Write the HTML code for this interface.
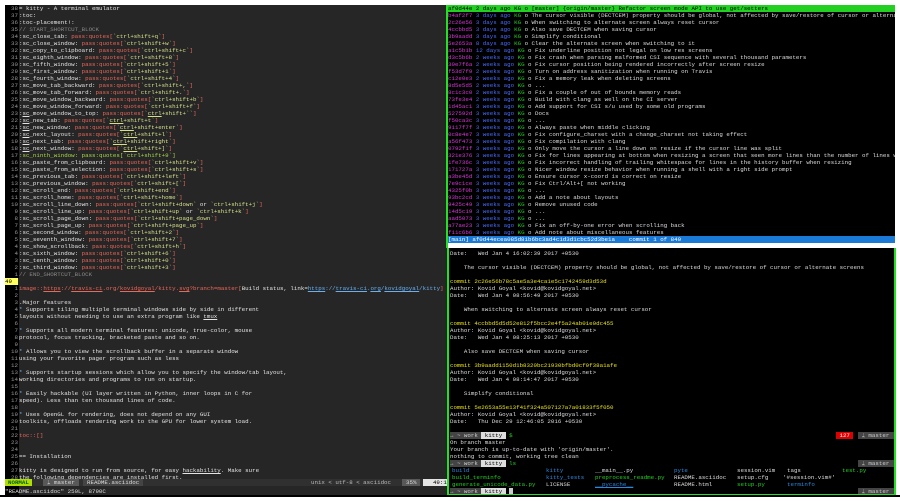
<!DOCTYPE html>
<html><head><meta charset="utf-8"><style>
*{margin:0;padding:0;box-sizing:border-box}
body{width:900px;height:503px;background:#fff;position:relative;overflow:hidden;font-family:"Liberation Mono",monospace;font-size:5.8px;line-height:7px;white-space:normal;color:#ddd}
.p{position:absolute;overflow:hidden}
.row{height:7px;display:block;overflow:hidden;white-space:pre}
#L{left:5px;top:5px;width:442px;height:490px;background:#262626}
#G{position:absolute;left:0;top:0;width:14px;height:100%;background:#000}
.ln{display:inline-block;width:13px;text-align:right;color:#999;margin-right:1px}
.w{color:#e4e4e4}.r{color:#e8685a}.y{color:#d7e08a}.g{color:#a8d84a}.c{color:#888}.b{color:#6ab0f0}
.u{text-decoration:underline}
#RT{left:448px;top:5px;width:447px;height:238px;background:#000}
#RB{left:447px;top:248px;width:449px;height:248px;background:#000;border-left:2px solid #22e022;border-right:2px solid #22e022;border-bottom:2px solid #22e022}
.m{color:#d838d8}.d{color:#4a6cff}.k{color:#22d022}.yl{color:#e8e020}.bl{color:#2a8ae0}
.s{white-space:pre}
</style></head><body>
<div class="p" id="L"><div id="G"></div>
<div style="position:absolute;left:0;top:0;width:442px">
<span class="row"><span class="ln">38</span><span class="w">= kitty - A terminal emulator</span></span>
<span class="row"><span class="ln">37</span><span class="w">:toc:</span></span>
<span class="row"><span class="ln">36</span><span class="w">:toc-placement!:</span></span>
<span class="row"><span class="ln">35</span><span class="c">// START_SHORTCUT_BLOCK</span></span>
<span class="row"><span class="ln">34</span><span class="w">:sc_close_tab: </span><span class="r">pass:quotes[</span><span class="y">`ctrl+shift+q`</span><span class="r">]</span></span>
<span class="row"><span class="ln">33</span><span class="w">:sc_close_window: </span><span class="r">pass:quotes[</span><span class="y">`ctrl+shift+w`</span><span class="r">]</span></span>
<span class="row"><span class="ln">32</span><span class="w">:sc_copy_to_clipboard: </span><span class="r">pass:quotes[</span><span class="y">`ctrl+shift+c`</span><span class="r">]</span></span>
<span class="row"><span class="ln">31</span><span class="w">:sc_eighth_window: </span><span class="r">pass:quotes[</span><span class="y">`ctrl+shift+8`</span><span class="r">]</span></span>
<span class="row"><span class="ln">30</span><span class="w">:sc_fifth_window: </span><span class="r">pass:quotes[</span><span class="y">`ctrl+shift+5`</span><span class="r">]</span></span>
<span class="row"><span class="ln">29</span><span class="w">:sc_first_window: </span><span class="r">pass:quotes[</span><span class="y">`ctrl+shift+1`</span><span class="r">]</span></span>
<span class="row"><span class="ln">28</span><span class="w">:sc_fourth_window: </span><span class="r">pass:quotes[</span><span class="y">`ctrl+shift+4`</span><span class="r">]</span></span>
<span class="row"><span class="ln">27</span><span class="w">:sc_move_tab_backward: </span><span class="r">pass:quotes[</span><span class="y">`ctrl+shift+,`</span><span class="r">]</span></span>
<span class="row"><span class="ln">26</span><span class="w">:sc_move_tab_forward: </span><span class="r">pass:quotes[</span><span class="y">`ctrl+shift+.`</span><span class="r">]</span></span>
<span class="row"><span class="ln">25</span><span class="w">:sc_move_window_backward: </span><span class="r">pass:quotes[</span><span class="y">`ctrl+shift+b`</span><span class="r">]</span></span>
<span class="row"><span class="ln">24</span><span class="w">:sc_move_window_forward: </span><span class="r">pass:quotes[</span><span class="y">`ctrl+shift+f`</span><span class="r">]</span></span>
<span class="row"><span class="ln">23</span><span class="w">:<span class="u">sc</span>_move_window_to_top: </span><span class="r">pass:quotes[</span><span class="y">`<span class="u">ctrl</span>+shift+``</span><span class="r">]</span></span>
<span class="row"><span class="ln">22</span><span class="w">:<span class="u">sc</span>_new_tab: </span><span class="r">pass:quotes[</span><span class="y">`<span class="u">ctrl</span>+shift+t`</span><span class="r">]</span></span>
<span class="row"><span class="ln">21</span><span class="w">:<span class="u">sc</span>_new_window: </span><span class="r">pass:quotes[</span><span class="y">`<span class="u">ctrl</span>+shift+enter`</span><span class="r">]</span></span>
<span class="row"><span class="ln">20</span><span class="w">:<span class="u">sc</span>_next_layout: </span><span class="r">pass:quotes[</span><span class="y">`<span class="u">ctrl</span>+shift+l`</span><span class="r">]</span></span>
<span class="row"><span class="ln">19</span><span class="w">:<span class="u">sc</span>_next_tab: </span><span class="r">pass:quotes[</span><span class="y">`<span class="u">ctrl</span>+shift+right`</span><span class="r">]</span></span>
<span class="row"><span class="ln">18</span><span class="w">:<span class="u">sc</span>_next_window: </span><span class="r">pass:quotes[</span><span class="y">`<span class="u">ctrl</span>+shift+]`</span><span class="r">]</span></span>
<span class="row"><span class="ln">17</span><span class="g">:sc_ninth_window: pass:quotes[`ctrl+shift+9`]</span></span>
<span class="row"><span class="ln">16</span><span class="w">:sc_paste_from_clipboard: </span><span class="r">pass:quotes[</span><span class="y">`ctrl+shift+v`</span><span class="r">]</span></span>
<span class="row"><span class="ln">15</span><span class="w">:sc_paste_from_selection: </span><span class="r">pass:quotes[</span><span class="y">`ctrl+shift+s`</span><span class="r">]</span></span>
<span class="row"><span class="ln">14</span><span class="w">:sc_previous_tab: </span><span class="r">pass:quotes[</span><span class="y">`ctrl+shift+left`</span><span class="r">]</span></span>
<span class="row"><span class="ln">13</span><span class="w">:sc_previous_window: </span><span class="r">pass:quotes[</span><span class="y">`ctrl+shift+[`</span><span class="r">]</span></span>
<span class="row"><span class="ln">12</span><span class="w">:sc_scroll_end: </span><span class="r">pass:quotes[</span><span class="y">`ctrl+shift+end`</span><span class="r">]</span></span>
<span class="row"><span class="ln">11</span><span class="w">:sc_scroll_home: </span><span class="r">pass:quotes[</span><span class="y">`ctrl+shift+home`</span><span class="r">]</span></span>
<span class="row"><span class="ln">10</span><span class="w">:sc_scroll_line_down: </span><span class="r">pass:quotes[</span><span class="y">`ctrl+shift+down`</span><span class="w"> or </span><span class="y">`ctrl+shift+j`</span><span class="r">]</span></span>
<span class="row"><span class="ln">9</span><span class="w">:sc_scroll_line_up: </span><span class="r">pass:quotes[</span><span class="y">`ctrl+shift+up`</span><span class="w"> or </span><span class="y">`ctrl+shift+k`</span><span class="r">]</span></span>
<span class="row"><span class="ln">8</span><span class="w">:sc_scroll_page_down: </span><span class="r">pass:quotes[</span><span class="y">`ctrl+shift+page_down`</span><span class="r">]</span></span>
<span class="row"><span class="ln">7</span><span class="w">:sc_scroll_page_up: </span><span class="r">pass:quotes[</span><span class="y">`ctrl+shift+page_up`</span><span class="r">]</span></span>
<span class="row"><span class="ln">6</span><span class="w">:sc_second_window: </span><span class="r">pass:quotes[</span><span class="y">`ctrl+shift+2`</span><span class="r">]</span></span>
<span class="row"><span class="ln">5</span><span class="w">:sc_seventh_window: </span><span class="r">pass:quotes[</span><span class="y">`ctrl+shift+7`</span><span class="r">]</span></span>
<span class="row"><span class="ln">4</span><span class="w">:sc_show_scrollback: </span><span class="r">pass:quotes[</span><span class="y">`ctrl+shift+h`</span><span class="r">]</span></span>
<span class="row"><span class="ln">4</span><span class="w">:sc_sixth_window: </span><span class="r">pass:quotes[</span><span class="y">`ctrl+shift+6`</span><span class="r">]</span></span>
<span class="row"><span class="ln">3</span><span class="w">:sc_tenth_window: </span><span class="r">pass:quotes[</span><span class="y">`ctrl+shift+0`</span><span class="r">]</span></span>
<span class="row"><span class="ln">2</span><span class="w">:sc_third_window: </span><span class="r">pass:quotes[</span><span class="y">`ctrl+shift+3`</span><span class="r">]</span></span>
<span class="row"><span class="ln">1</span><span class="c">// END_SHORTCUT_BLOCK</span></span>
<span class="row" style="background:#262626"><span class="ln" style="color:#000;background:#ffff5f;text-align:left">49</span></span>
<span class="row"><span class="ln">1</span><span class="r">image::<span class="u">https</span>://<span class="u">travis-ci</span>.org/<span class="u">kovidgoyal</span>/kitty.<span class="u">svg</span>?branch=master[</span><span class="w">Build status, link=</span><span class="b"><span class="u">https</span>://<span class="u">travis-ci</span>.<span class="u">org</span>/<span class="u">kovidgoyal</span>/kitty</span><span class="r">]</span></span>
<span class="row"><span class="ln">2</span></span>
<span class="row"><span class="ln">3</span><span class="w">.Major features</span></span>
<span class="row"><span class="ln">4</span><span class="b">*</span><span class="w"> Supports tiling multiple terminal windows side by side in different</span></span>
<span class="row"><span class="ln">5</span><span class="w">layouts without needing to use an extra program like <span class="u">tmux</span></span></span>
<span class="row"><span class="ln">6</span></span>
<span class="row"><span class="ln">7</span><span class="b">*</span><span class="w"> Supports all modern terminal features: unicode, true-color, mouse</span></span>
<span class="row"><span class="ln">8</span><span class="w">protocol, focus tracking, bracketed paste and so on.</span></span>
<span class="row"><span class="ln">9</span></span>
<span class="row"><span class="ln">10</span><span class="b">*</span><span class="w"> Allows you to view the scrollback buffer in a separate window</span></span>
<span class="row"><span class="ln">11</span><span class="w">using your favorite pager program such as less</span></span>
<span class="row"><span class="ln">12</span></span>
<span class="row"><span class="ln">13</span><span class="b">*</span><span class="w"> Supports startup sessions which allow you to specify the window/tab layout,</span></span>
<span class="row"><span class="ln">14</span><span class="w">working directories and programs to run on startup.</span></span>
<span class="row"><span class="ln">15</span></span>
<span class="row"><span class="ln">16</span><span class="b">*</span><span class="w"> Easily hackable (UI layer written in Python, inner loops in C for</span></span>
<span class="row"><span class="ln">17</span><span class="w">speed). Less than ten thousand lines of code.</span></span>
<span class="row"><span class="ln">18</span></span>
<span class="row"><span class="ln">19</span><span class="b">*</span><span class="w"> Uses OpenGL for rendering, does not depend on any GUI</span></span>
<span class="row"><span class="ln">20</span><span class="w">toolkits, offloads rendering work to the GPU for lower system load.</span></span>
<span class="row"><span class="ln">21</span></span>
<span class="row"><span class="ln">22</span><span class="r">toc::[]</span></span>
<span class="row"><span class="ln">23</span></span>
<span class="row"><span class="ln">24</span></span>
<span class="row"><span class="ln">25</span><span class="w">== Installation</span></span>
<span class="row"><span class="ln">26</span></span>
<span class="row"><span class="ln">27</span><span class="w">kitty is designed to run from source, for easy <span class="u">hackability</span>. Make sure</span></span>
<span class="row"><span class="ln">28</span><span class="w">the following dependencies are installed first.</span></span>
</div>
<div class="s" style="position:absolute;left:0;top:474px;width:442px;height:7px;background:#303030">
<span style="position:absolute;left:0;top:0;height:7px;padding:0 3px;background:#afdf00;color:#005f00;font-weight:bold">NORMAL</span>
<span style="position:absolute;left:38px;top:0;height:7px;padding:0 4px;background:#585858;color:#ddd">&#x16E6; master</span>
<span style="position:absolute;left:78px;top:0;height:7px;padding:0 4px;background:#444;color:#ddd">README.asciidoc</span>
<span style="position:absolute;left:306px;top:0;color:#bbb">unix &lt; utf-8 &lt; asciidoc</span>
<span style="position:absolute;left:397px;top:0;height:7px;padding:0 4px;background:#585858;color:#ddd">35%</span>
<span style="position:absolute;left:418px;top:0;height:7px;width:24px;padding:0 3px;background:#e4e4e4;color:#000">  49:1</span>
</div>
<div class="s" style="position:absolute;left:0;top:483px;color:#ddd">"README.asciidoc" 250L, 8790C</div>
</div>
<div style="position:absolute;left:446px;top:5px;width:2px;height:243px;background:#22e022"></div>

<div class="p" id="RT">
<span class="row" style="background:#22d022;color:#000">af0d44e 2 days ago KG o [master] {origin/master} Refactor screen mode API to use get/setters</span>
<span class="row"><span class="m">b4af2f7</span> <span class="d">3 days ago</span> <span class="k">KG</span> o The cursor visible (DECTCEM) property should be global, not affected by save/restore of cursor or alternate screens</span>
<span class="row"><span class="m">2c26e56</span> <span class="d">3 days ago</span> <span class="k">KG</span> o When switching to alternate screen always reset cursor</span>
<span class="row"><span class="m">4ccbbd5</span> <span class="d">3 days ago</span> <span class="k">KG</span> o Also save DECTCEM when saving cursor</span>
<span class="row"><span class="m">3b9aadd</span> <span class="d">3 days ago</span> <span class="k">KG</span> o Simplify conditional</span>
<span class="row"><span class="m">5e2653a</span> <span class="d">8 days ago</span> <span class="k">KG</span> o Clear the alternate screen when switching to it</span>
<span class="row"><span class="m">a1c5b1b</span> <span class="d">12 days ago</span> <span class="k">KG</span> o Fix underline position not legal on low res screens</span>
<span class="row"><span class="m">d3c5b6b</span> <span class="d">2 weeks ago</span> <span class="k">KG</span> o Fix crash when parsing malformed CSI sequence with several thousand parameters</span>
<span class="row"><span class="m">30e7f6a</span> <span class="d">2 weeks ago</span> <span class="k">KG</span> o Fix cursor position being rendered incorrectly after screen resize</span>
<span class="row"><span class="m">f53d7f9</span> <span class="d">2 weeks ago</span> <span class="k">KG</span> o Turn on address sanitization when running on Travis</span>
<span class="row"><span class="m">c12e0e3</span> <span class="d">2 weeks ago</span> <span class="k">KG</span> o Fix a memory leak when deleting screens</span>
<span class="row"><span class="m">8d5e5d5</span> <span class="d">2 weeks ago</span> <span class="k">KG</span> o ...</span>
<span class="row"><span class="m">8c1c3c0</span> <span class="d">2 weeks ago</span> <span class="k">KG</span> o Fix a couple of out of bounds memory reads</span>
<span class="row"><span class="m">73fe3e4</span> <span class="d">2 weeks ago</span> <span class="k">KG</span> o Build with clang as well on the CI server</span>
<span class="row"><span class="m">1d45ac1</span> <span class="d">3 weeks ago</span> <span class="k">KG</span> o Add support for CSI s/u used by some old programs</span>
<span class="row"><span class="m">527592d</span> <span class="d">3 weeks ago</span> <span class="k">KG</span> o Docs</span>
<span class="row"><span class="m">f50ca3c</span> <span class="d">3 weeks ago</span> <span class="k">KG</span> o ...</span>
<span class="row"><span class="m">9117f7f</span> <span class="d">3 weeks ago</span> <span class="k">KG</span> o Always paste when middle clicking</span>
<span class="row"><span class="m">0c8e4e7</span> <span class="d">3 weeks ago</span> <span class="k">KG</span> o Fix configure_charset with a change_charset not taking effect</span>
<span class="row"><span class="m">a56f473</span> <span class="d">3 weeks ago</span> <span class="k">KG</span> o Fix compilation with clang</span>
<span class="row"><span class="m">0792f1f</span> <span class="d">3 weeks ago</span> <span class="k">KG</span> o Only move the cursor a line down on resize if the cursor line was split</span>
<span class="row"><span class="m">321e376</span> <span class="d">3 weeks ago</span> <span class="k">KG</span> o Fix for lines appearing at bottom when resizing a screen that seen more lines than the number of lines w</span>
<span class="row"><span class="m">1fe736c</span> <span class="d">3 weeks ago</span> <span class="k">KG</span> o Fix incorrect handling of trailing whitespace for lines in the history buffer when resizing</span>
<span class="row"><span class="m">171727a</span> <span class="d">3 weeks ago</span> <span class="k">KG</span> o Nicer window resize behavior when running a shell with a right side prompt</span>
<span class="row"><span class="m">a3be45d</span> <span class="d">3 weeks ago</span> <span class="k">KG</span> o Ensure cursor x-coord is correct on resize</span>
<span class="row"><span class="m">7e9c1ce</span> <span class="d">3 weeks ago</span> <span class="k">KG</span> o Fix Ctrl/Alt+[ not working</span>
<span class="row"><span class="m">4325f0b</span> <span class="d">3 weeks ago</span> <span class="k">KG</span> o ...</span>
<span class="row"><span class="m">93bc2cd</span> <span class="d">3 weeks ago</span> <span class="k">KG</span> o Add a note about layouts</span>
<span class="row"><span class="m">9425c49</span> <span class="d">3 weeks ago</span> <span class="k">KG</span> o Remove unused code</span>
<span class="row"><span class="m">14d5c19</span> <span class="d">3 weeks ago</span> <span class="k">KG</span> o ...</span>
<span class="row"><span class="m">aad5073</span> <span class="d">3 weeks ago</span> <span class="k">KG</span> o ...</span>
<span class="row"><span class="m">a77ae23</span> <span class="d">3 weeks ago</span> <span class="k">KG</span> o Fix an off-by-one error when scrolling back</span>
<span class="row"><span class="m">f11c6b6</span> <span class="d">3 weeks ago</span> <span class="k">KG</span> o Add note about miscellaneous features</span>
<span class="row" style="position:absolute;top:231px;left:0;width:447px;background:#1a7ad6;color:#fff">[main] af0d44ecea085d81b6bc3ad4c1d3d1cbc52d3be1a    commit 1 of 840                                                                         100%</span>
</div>

<div class="p" id="RB">
<div style="position:absolute;left:1px;top:2px;width:445px">
<span class="row">Date:   Wed Jan 4 16:02:39 2017 +0530</span>
<span class="row"></span>
<span class="row">    The cursor visible (DECTCEM) property should be global, not affected by save/restore of cursor or alternate screens</span>
<span class="row"></span>
<span class="row yl">commit 2c26e56b78c5ae5a3e4ca1e5c1742459d3d53d</span>
<span class="row">Author: Kovid Goyal &lt;kovid@kovidgoyal.net&gt;</span>
<span class="row">Date:   Wed Jan 4 08:56:49 2017 +0530</span>
<span class="row"></span>
<span class="row">    When switching to alternate screen always reset cursor</span>
<span class="row"></span>
<span class="row yl">commit 4ccbbd5d5d52e812f5bcc2e4f5a24ab01e0dc455</span>
<span class="row">Author: Kovid Goyal &lt;kovid@kovidgoyal.net&gt;</span>
<span class="row">Date:   Wed Jan 4 08:25:13 2017 +0530</span>
<span class="row"></span>
<span class="row">    Also save DECTCEM when saving cursor</span>
<span class="row"></span>
<span class="row yl">commit 3b9aadd1150d1b8320bc21930bfbd0cf9f38a1afe</span>
<span class="row">Author: Kovid Goyal &lt;kovid@kovidgoyal.net&gt;</span>
<span class="row">Date:   Wed Jan 4 08:14:47 2017 +0530</span>
<span class="row"></span>
<span class="row">    Simplify conditional</span>
<span class="row"></span>
<span class="row yl">commit 5e2653a55e13f41f324a507127a7a01833f5f050</span>
<span class="row">Author: Kovid Goyal &lt;kovid@kovidgoyal.net&gt;</span>
<span class="row">Date:   Thu Dec 29 12:46:05 2016 +0530</span>
<span class="row"></span>
<span class="row" style="position:relative"><span style="background:#444;color:#ccc">&#x2192; ~ work </span><span style="background:#ddd;color:#000"> kitty </span><span class="k"> $</span><span style="position:absolute;left:386px;background:#d00;color:#fff"> 127 </span><span style="position:absolute;left:408px;width:37px;background:#444;color:#ccc"> &#x16E6; master</span></span>
<span class="row">On branch master</span>
<span class="row">Your branch is up-to-date with 'origin/master'.</span>
<span class="row">nothing to commit, working tree clean</span>
<span class="row" style="position:relative"><span style="background:#444;color:#ccc">&#x2192; ~ work </span><span style="background:#ddd;color:#000"> kitty </span><span class="k"> ls</span><span style="position:absolute;left:408px;width:37px;background:#444;color:#ccc"> &#x16E6; master</span></span>
<span class="row" style="position:relative"><span class="bl" style="position:absolute;left:2px">build</span><span class="bl" style="position:absolute;left:96px">kitty</span><span style="position:absolute;left:145px">__main__.py</span><span class="bl" style="position:absolute;left:224px">pyte</span><span style="position:absolute;left:287px">session.vim</span><span style="position:absolute;left:337px">tags</span><span class="k" style="position:absolute;left:392px">test.py</span></span>
<span class="row" style="position:relative"><span class="k" style="position:absolute;left:2px">build_terminfo</span><span class="bl" style="position:absolute;left:96px">kitty_tests</span><span class="k" style="position:absolute;left:145px">preprocess_readme.py</span><span style="position:absolute;left:224px">README.asciidoc</span><span style="position:absolute;left:287px">setup.cfg</span><span style="position:absolute;left:333px">'#session.vim#'</span></span>
<span class="row" style="position:relative"><span class="k" style="position:absolute;left:2px">generate_unicode_data.py</span><span style="position:absolute;left:96px">LICENSE</span><span class="bl u" style="position:absolute;left:145px">__pycache__</span><span style="position:absolute;left:224px">README.html</span><span class="k" style="position:absolute;left:287px">setup.py</span><span class="bl" style="position:absolute;left:337px">terminfo</span></span>
<span class="row" style="position:relative"><span style="background:#444;color:#ccc">&#x2192; ~ work </span><span style="background:#ddd;color:#000"> kitty </span> <span style="background:#ccc"> </span><span style="position:absolute;left:408px;width:37px;background:#444;color:#ccc"> &#x16E6; master</span></span>
</div>
</div>
<div style="position:absolute;left:0;top:495px;width:900px;height:2px;background:#000"></div>
</body></html>
